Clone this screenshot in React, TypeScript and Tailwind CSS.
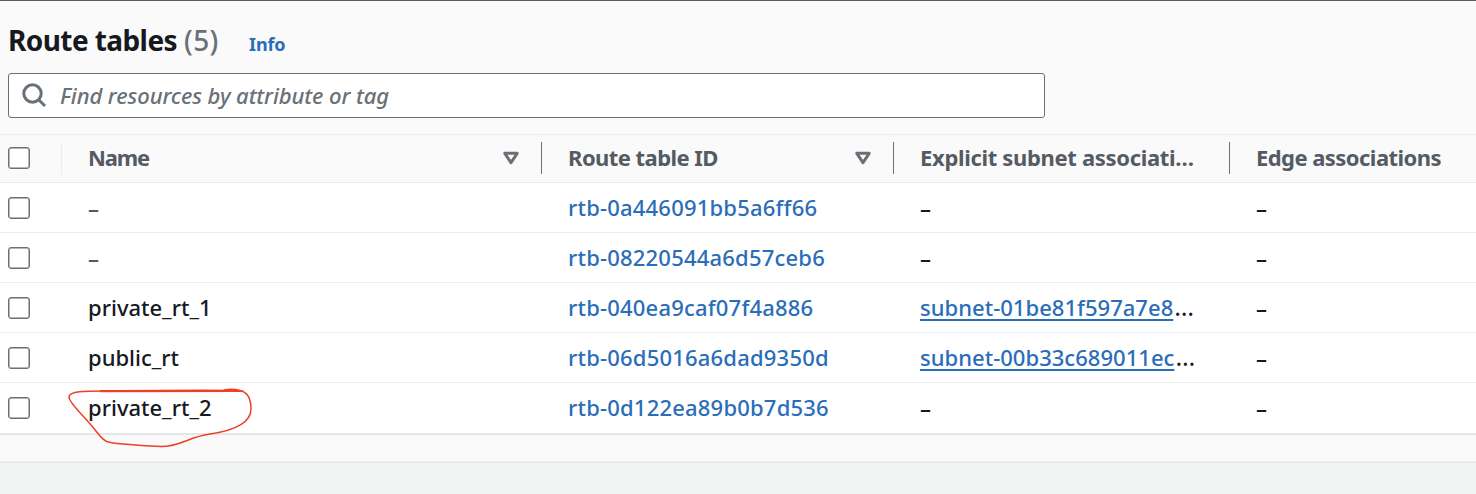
import React from 'react';

type Row = { name: string; nameClass?: string; id: string; idClass: string; subnet?: string };

const rows: Row[] = [
  { name: '–', nameClass: 'text-[#545b64]', id: 'rtb-0a446091bb5a6ff66', idClass: 'tracking-[0.2px]' },
  { name: '–', nameClass: 'text-[#545b64]', id: 'rtb-08220544a6d57ceb6', idClass: 'tracking-[0.2px]' },
  { name: 'private_rt_1', id: 'rtb-040ea9caf07f4a886', idClass: 'tracking-[0.2px]', subnet: 'subnet-01be81f597a7e8' },
  { name: 'public_rt', id: 'rtb-06d5016a6dad9350d', idClass: 'tracking-[0.2px]', subnet: 'subnet-00b33c689011ec' },
  { name: 'private_rt_2', id: 'rtb-0d122ea89b0b7d536', idClass: 'tracking-[0.2px]' },
];

const grid = 'grid grid-cols-[62px_480px_352px_336px_246px]';

function Checkbox() {
  return <span role="checkbox" aria-checked="false" className="block size-[22px] rounded-[3px] border border-[#687078] bg-white shadow-[inset_0_0_0_0.5px_#687078]" />;
}

function SortIcon() {
  return (
    <svg width="16" height="14" viewBox="0 0 16 14" className="shrink-0" aria-hidden="true">
      <path d="M1.800 2.300H14.200L8 11.700Z" fill="none" stroke="#687078" strokeWidth="3" strokeLinejoin="round" />
    </svg>
  );
}

function HeaderCell({ label, labelClass, sortable, divider }: { label: string; labelClass: string; sortable?: boolean; divider?: boolean }) {
  return (
    <div className={`flex h-8 items-center justify-between pl-[26px] ${divider ? 'border-r border-[#687078]' : ''}`}>
      <span className={`pb-[2px] font-bold whitespace-nowrap text-[#545b64] ${labelClass}`}>{label}</span>
      {sortable && <span className="mr-[22px] flex"><SortIcon /></span>}
    </div>
  );
}

function Annotation() {
  return (
    <svg width="190" height="67" viewBox="0 0 190 67" className="pointer-events-none absolute top-0 left-[65px]" aria-hidden="true">
      <g fill="none" stroke="#ed4027" strokeLinecap="round" strokeLinejoin="round">
        <path d="M178 8C168 7 90 7.500 40 8C20 8 4 8 4 14C4 20 18 32 26 42C34 51 37 57.500 43 59C49 60.500 76 62.500 96 63.500C116 63.500 123 54 145 51C162 48.500 186 43 186 26C186 14 182 9 175 7.500C170 6 164 6 159 7" strokeWidth="1.500" />
        <path d="M36 8.200L176 8" strokeWidth="2.200" />
      </g>
    </svg>
  );
}

export default function App() {
  return (
    <main className="flex h-[494px] w-[1476px] flex-col overflow-hidden bg-[#f2f3f3] font-['Noto_Sans',sans-serif] text-[22px] leading-[30px] text-[#16191f]">
      <section className="flex h-[463px] shrink-0 flex-col border-t border-b-2 border-t-[#545b64] border-b-[#eaeded] bg-[#fafafa]">
        <header className="flex h-[72px] shrink-0 items-baseline pt-[20px] pl-2 leading-[38px]">
          <h1 className="w-[176px] text-[28px] font-bold tracking-[-0.58px] whitespace-nowrap">Route tables</h1>
          <span className="w-[65px] text-[28px] font-medium tracking-[0.4px] text-[#687078]">(5)</span>
          <a className="text-[18px] font-bold tracking-[-0.1px] text-[#2a6db8]">Info</a>
        </header>
        <div className="ml-2 flex h-[45px] w-[1037px] shrink-0 items-center rounded-[3px] border border-[#687078] bg-white">
          <svg width="26" height="26" viewBox="0 0 26 26" className="ml-3" fill="none" stroke="#687078" strokeWidth="3" aria-hidden="true">
            <circle cx="11.500" cy="10.500" r="8.700" />
            <path d="M17.500 16.500L24 23" />
          </svg>
          <span className="ml-[13px] pb-[2px] font-medium tracking-[-0.08px] whitespace-nowrap text-[#687078] italic">Find resources by attribute or tag</span>
        </div>
        <div className="mt-4 border-b-2 border-[#e5e7e7] bg-white font-medium">
          <div className={`${grid} h-[49px] items-start border-y border-[#eaeded] bg-[#fafafa] pt-[7px]`}>
            <div className="flex h-8 items-center border-r border-[#eaeded] pl-2"><Checkbox /></div>
            <HeaderCell label="Name" labelClass="tracking-[-1.2px]" sortable divider />
            <HeaderCell label="Route table ID" labelClass="tracking-[-0.55px]" sortable divider />
            <HeaderCell label="Explicit subnet associati…" labelClass="tracking-[-0.33px]" divider />
            <HeaderCell label="Edge associations" labelClass="tracking-[-0.55px]" />
          </div>
          {rows.map((r, i) => (
            <div key={r.id} className={`${grid} relative h-[50px] items-center whitespace-nowrap ${i < 4 ? 'border-b border-[#eaeded]' : ''}`}>
              <div className="pl-2"><Checkbox /></div>
              <div className={`pl-[26px] ${r.name === '–' ? '' : 'pb-[2px]'} ${r.nameClass ?? ''}`}>{r.name}</div>
              <div className={`pb-[2px] pl-[26px] text-[#2a6db8] ${r.idClass}`}>{r.id}</div>
              <div className={`pl-[26px] ${r.subnet ? 'pb-[2px]' : ''}`}>
                {r.subnet ? <><a className="tracking-[0.03px] text-[#2a6db8] underline decoration-2 underline-offset-[3px]">{r.subnet}</a><span className="ml-px text-[25px] leading-[20px] font-normal">…</span></> : '–'}
              </div>
              <div className="pl-[26px]">–</div>
              {i === 4 && <Annotation />}
            </div>
          ))}
        </div>
      </section>
    </main>
  );
}
